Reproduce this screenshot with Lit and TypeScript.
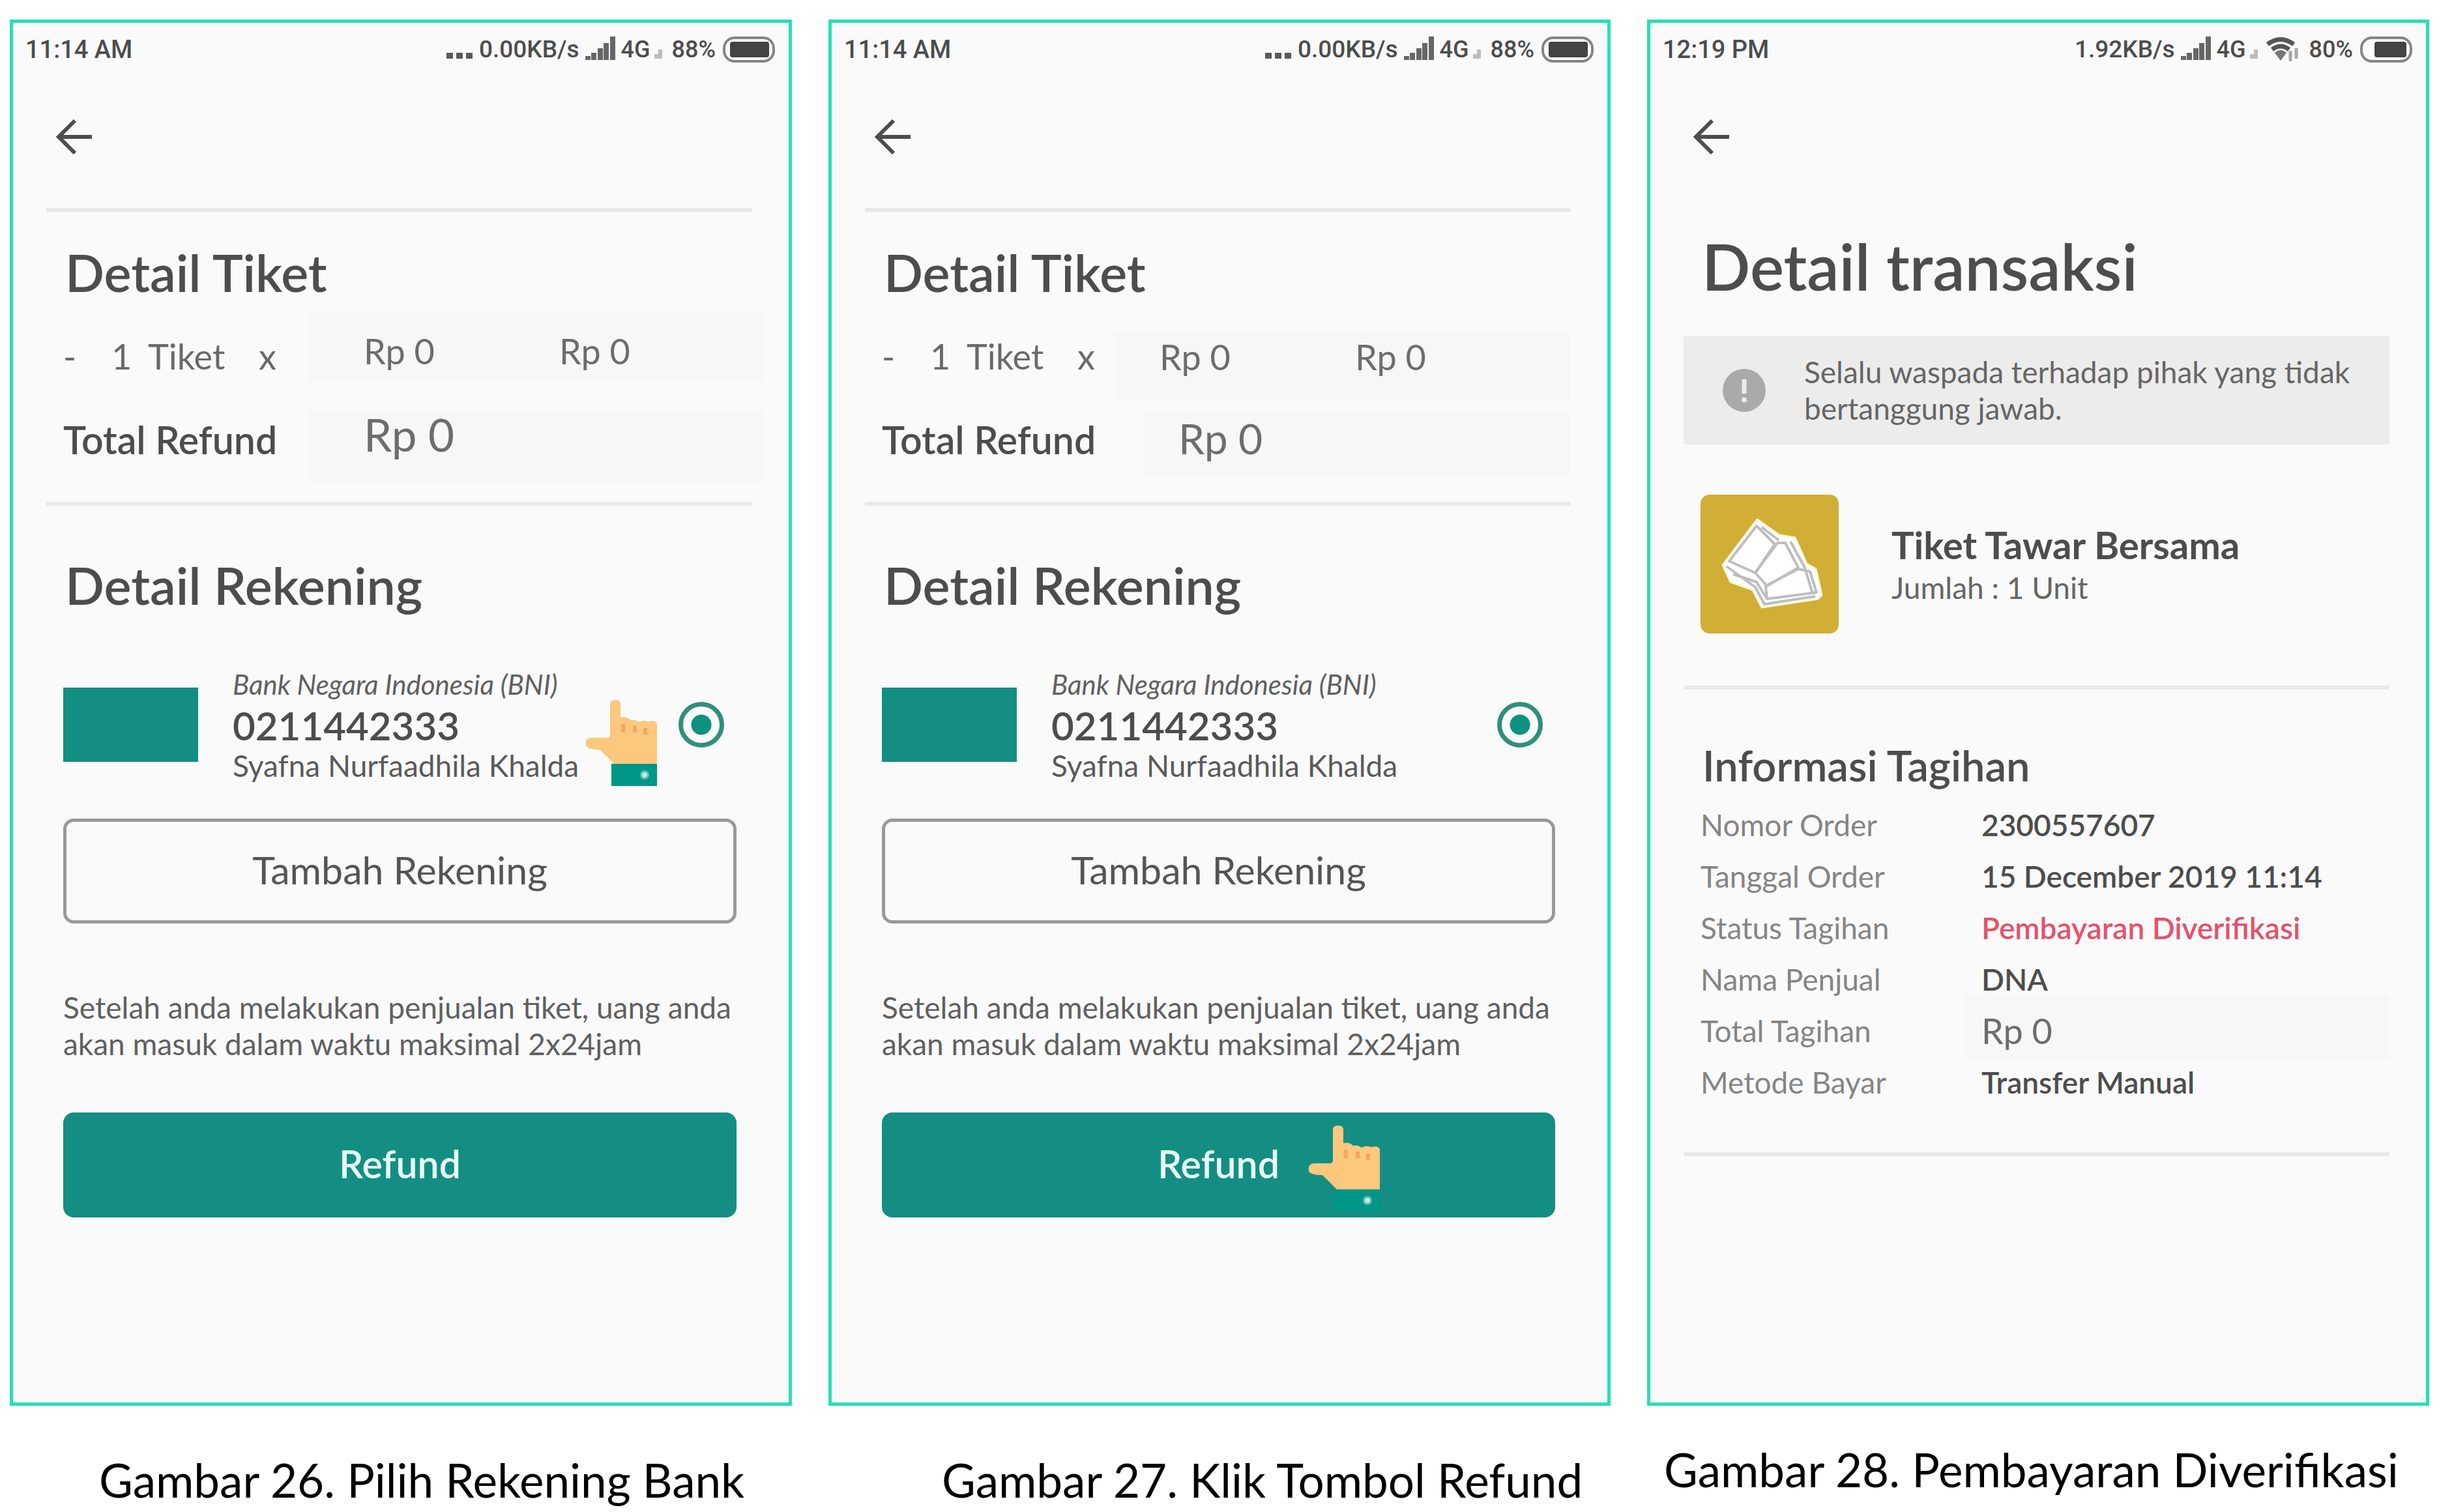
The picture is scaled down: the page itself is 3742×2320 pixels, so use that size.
import { LitElement, html, css, svg, nothing } from "lit";
import { customElement, property } from "lit/decorators.js";

const shared = css`
  * {
    box-sizing: border-box;
  }
  :host {
    display: block;
    font-family: Lato, "Open Sans", sans-serif;
    color: #4d4d4d;
  }
  h1,
  h2,
  h3,
  p,
  dl,
  dd,
  figure {
    margin: 0;
  }
  svg {
    display: block;
    flex: none;
  }
  .divider {
    height: 6px;
    margin: 0 56px 0 51px;
    border: 0;
    background: #e8e8e8;
  }
`;

const hand = html`
  <svg width="112" height="132" viewBox="0 0 112 132" aria-hidden="true">
    <path
      fill="#fbc87d"
      d="M40 6Q40 0 48 0T56 6V27Q66 25 71 31Q78 29 84 34Q90 30 98 33Q112 30 112 38V98H46L24 76Q6 76 3 70Q1 58 12 58H36Q40 58 40 52Z"
    />
    <path fill="none" stroke="#f2a763" stroke-width="6" d="M60 37V50M78 40V50M94 43V53" />
    <rect x="42" y="98" width="70" height="34" fill="#009688" />
    <circle cx="93" cy="115" r="7" fill="#5fbcb2" />
    <circle cx="93" cy="115" r="4" fill="#c4e7e3" />
  </svg>
`;

@customElement("status-bar")
export class StatusBar extends LitElement {
  static styles = [
    shared,
    css`
      .bar {
        display: flex;
        align-items: center;
        height: 82px;
        padding: 0 20px 0 19px;
        font: 500 38px/44px Roboto, sans-serif;
      }
      .time {
        flex: 1;
      }
      .rate {
        margin-right: 9px;
        font-size: 37px;
      }
      .dots {
        margin-right: 10px;
      }
      .net {
        margin: 0 6px 0 9px;
        font-size: 36px;
      }
      .percent {
        margin: 0 11px 0 15px;
        font-size: 36px;
      }
      .wifi {
        margin-left: 12px;
      }
    `,
  ];

  @property() time = "";
  @property() rate = "";
  @property() percent = "";
  @property({ type: Boolean }) wifi = false;

  render() {
    return html`
      <div class="bar">
        <span class="time">${this.time}</span>
        ${this.wifi
          ? nothing
          : html`<svg class="dots" width="40" height="36" viewBox="0 0 40 36" aria-hidden="true">
              <path fill="#5a5a5a" d="M0 23h10v9H0zM15 23h10v9H15zM30 23h10v9H30z" />
            </svg>`}
        <span class="rate">${this.rate}</span>
        <svg width="46" height="40" viewBox="0 0 46 40" aria-hidden="true">
          <path fill="#666" d="M0 30h8v6H0zM9 25h8v11H9zM19 18h8v18h-8zM28 10h8v26h-8zM38 0h8v36h-8z" />
        </svg>
        <span class="net">4G</span>
        <svg width="12" height="36" viewBox="0 0 12 36" aria-hidden="true">
          <path fill="#bdbdbd" d="M0 25h6v7H0zM6 18h6v14H6z" />
        </svg>
        ${this.wifi
          ? html`<svg class="wifi" width="52" height="40" viewBox="0 0 52 40" aria-hidden="true">
              <path fill="none" stroke="#555" stroke-width="7" d="M3 12Q23-3 43 12M10 20Q23 10 36 20" />
              <path fill="#777" d="M14 25Q23 17 32 25L23 37Z" />
              <path fill="none" stroke="#a8a8a8" stroke-width="5" d="M38 22V38M47 18V34" />
            </svg>`
          : nothing}
        <span class="percent">${this.percent}</span>
        <svg width="81" height="42" viewBox="0 0 81 42" aria-hidden="true">
          <rect x="2" y="3" width="76" height="36" rx="16" fill="none" stroke="#858585" stroke-width="4" />
          <rect
            x=${this.wifi ? 22 : 11}
            y="9"
            width=${this.wifi ? 49 : 60}
            height="24"
            rx="4"
            fill="#434343"
          />
        </svg>
      </div>
    `;
  }
}

@customElement("back-link")
export class BackLink extends LitElement {
  static styles = [
    shared,
    css`
      button {
        display: block;
        width: 56px;
        height: 56px;
        margin: 65px 0 0 65px;
        padding: 0;
        border: 0;
        background: none;
      }
    `,
  ];

  render() {
    return html`
      <button aria-label="Kembali">
        <svg width="56" height="56" viewBox="0 0 56 56">
          <path fill="none" stroke="#4d4d4d" stroke-width="6" d="M30 3L5 28L30 53M5 28H56" />
        </svg>
      </button>
    `;
  }
}

@customElement("refund-screen")
export class RefundScreen extends LitElement {
  static styles = [
    shared,
    css`
      .rule-top {
        margin-top: 81px;
      }
      .rule-mid {
        margin-top: 30px;
      }
      h2 {
        padding-left: 80px;
        font-size: 79px;
        line-height: 100px;
        font-weight: 600;
      }
      .tickets {
        margin: 43px 0 9px;
      }
      .account-title {
        margin-top: 72px;
      }
      .row {
        display: flex;
        align-items: flex-start;
        padding: 0 39px 0 77px;
        font-size: 54px;
        line-height: 64px;
      }
      .row.inset {
        padding-right: 57px;
      }
      .items {
        min-height: 154px;
      }
      .totals {
        min-height: 109px;
      }
      .label {
        display: grid;
        grid-template-columns: 74px 56px 170px 1fr;
        flex: none;
        width: 375px;
        padding-top: 38px;
        color: #6a6a6a;
      }
      .inset .label {
        width: 356px;
      }
      .total-label {
        flex: none;
        width: 375px;
        padding-top: 12px;
        font-size: 59px;
        font-weight: 600;
      }
      .inset .total-label {
        width: 402px;
      }
      .box {
        display: grid;
        grid-template-columns: 300px 1fr;
        flex: 1;
        height: 108px;
        padding: 30px 0 0 86px;
        background: #f7f7f7;
        color: #6d6d6d;
      }
      .inset .box {
        margin-top: 30px;
        padding: 9px 0 0 70px;
      }
      .totals .box {
        padding-top: 4px;
        font-size: 69px;
      }
      .totals.inset .box {
        height: 100px;
        margin-top: 0;
        padding: 10px 0 0 53px;
        font-size: 64px;
      }
      .account {
        position: relative;
        display: flex;
        align-items: center;
        margin-top: 71px;
        padding: 0 99px 0 77px;
      }
      .logo {
        width: 207px;
        height: 114px;
        margin-right: 53px;
        background: #148e83;
      }
      .holder {
        flex: 1;
        display: grid;
      }
      .bank {
        font-size: 42px;
        line-height: 62px;
        font-style: italic;
        color: #606060;
      }
      .number {
        font-size: 60px;
        line-height: 64px;
        font-weight: 600;
      }
      .name {
        font-size: 46px;
        line-height: 60px;
        color: #5a5a5a;
      }
      .radio {
        appearance: none;
        width: 70px;
        height: 70px;
        margin: 0;
        border: 7px solid #2f8f7c;
        border-radius: 50%;
        background: radial-gradient(circle, #0f9180 15px, transparent 16px);
      }
      .actions {
        display: flex;
        flex-direction: column;
        padding: 51px 80px 0 77px;
      }
      .actions button {
        height: 161px;
        padding: 0 0 4px;
        border-radius: 16px;
        font-family: inherit;
        font-size: 59px;
      }
      .outline {
        border: 5px solid #999;
        background: transparent;
        color: #555;
      }
      .note {
        margin: 101px 0 77px;
        font-size: 46px;
        line-height: 56px;
        color: #606060;
      }
      .submit {
        position: relative;
        border: 0;
        background: #148e83;
        color: #e9fffb;
        font-weight: 600;
      }
      .pointer {
        position: absolute;
      }
      .account .pointer {
        top: 55px;
        left: 876px;
      }
      .submit .pointer {
        top: 20px;
        left: 652px;
      }
    `,
  ];

  @property() step: "bank" | "refund" = "bank";

  render() {
    const inset = this.step === "refund" ? "inset" : "";
    const pointer = html`<span class="pointer">${hand}</span>`;
    return html`
      <status-bar time="11:14 AM" rate="0.00KB/s" percent="88%"></status-bar>
      <back-link></back-link>
      <hr class="divider rule-top" />
      <h2 class="tickets">Detail Tiket</h2>
      <div class="row items ${inset}">
        <div class="label"><span>-</span><span>1</span><span>Tiket</span><span>x</span></div>
        <div class="box"><span>Rp 0</span><span>Rp 0</span></div>
      </div>
      <div class="row totals ${inset}">
        <div class="total-label">Total Refund</div>
        <div class="box"><span>Rp 0</span></div>
      </div>
      <hr class="divider rule-mid" />
      <h2 class="account-title">Detail Rekening</h2>
      <div class="account">
        <div class="logo"></div>
        <label class="holder" for="account">
          <span class="bank">Bank Negara Indonesia (BNI)</span>
          <span class="number">0211442333</span>
          <span class="name">Syafna Nurfaadhila Khalda</span>
        </label>
        <input class="radio" id="account" type="radio" name="account" checked />
        ${this.step === "bank" ? pointer : nothing}
      </div>
      <div class="actions">
        <button class="outline">Tambah Rekening</button>
        <p class="note">
          Setelah anda melakukan penjualan tiket, uang anda<br />akan masuk dalam waktu maksimal 2x24jam
        </p>
        <button class="submit">Refund${this.step === "refund" ? pointer : nothing}</button>
      </div>
    `;
  }
}

const invoice: { label: string; value: string; kind?: string }[] = [
  { label: "Nomor Order", value: "2300557607" },
  { label: "Tanggal Order", value: "15 December 2019 11:14" },
  { label: "Status Tagihan", value: "Pembayaran Diverifikasi", kind: "status" },
  { label: "Nama Penjual", value: "DNA" },
  { label: "Total Tagihan", value: "Rp 0", kind: "amount" },
  { label: "Metode Bayar", value: "Transfer Manual" },
];

const ticketLines = svg`
  <path fill="#fff" stroke="#fff7dc" stroke-width="3" stroke-linejoin="round"
    d="M87 38L121 62L145 66L163 106L177 114L186 154L180 160L94 173L80 146L46 134L34 108Z" />
  <g fill="none" stroke="#bdbdc2" stroke-width="4" stroke-linejoin="round">
    <path d="M86 48L114 76L84 120L44 102ZM94 50L120 70" />
    <path d="M118 74L130 74L150 112L102 140L84 120ZM138 72L160 112" />
    <path d="M150 114L168 118L178 150L102 160L100 140ZM160 112L172 152" />
    <path d="M40 110L84 142L98 168L176 156M50 122L86 134L102 160" />
  </g>
`;

@customElement("transaction-screen")
export class TransactionScreen extends LitElement {
  static styles = [
    shared,
    css`
      h1 {
        margin-top: 110px;
        padding-left: 79px;
        font-size: 98px;
        line-height: 120px;
        font-weight: 600;
      }
      .alert {
        display: flex;
        align-items: center;
        gap: 58px;
        height: 166px;
        margin: 48px 56px 0 51px;
        padding-left: 60px;
        background: #ececec;
        color: #666;
        font-size: 46px;
        line-height: 56px;
      }
      .product {
        display: flex;
        align-items: center;
        gap: 81px;
        margin: 77px 0 80px 77px;
      }
      .thumb {
        border-radius: 14px;
        background: #d1ae35;
      }
      .product h2 {
        font-size: 58px;
        line-height: 72px;
        font-weight: 700;
      }
      .product p {
        font-size: 46px;
        line-height: 60px;
        color: #666;
      }
      h3 {
        margin: 76px 0 12px;
        padding-left: 80px;
        font-size: 65px;
        line-height: 80px;
        font-weight: 600;
      }
      dl {
        display: grid;
        grid-template-columns: 404px 1fr;
        margin-bottom: 68px;
        padding: 0 56px 0 77px;
        font-size: 46px;
        line-height: 79px;
      }
      dt {
        color: #858585;
      }
      dd {
        padding-left: 27px;
        font-weight: 600;
      }
      .status {
        color: #e5526b;
      }
      .amount {
        margin: -16px 0 -4px;
        padding-top: 16px;
        padding-bottom: 4px;
        background: #f7f7f7;
        color: #6d6d6d;
        font-size: 54px;
        font-weight: 400;
      }
    `,
  ];

  render() {
    return html`
      <status-bar time="12:19 PM" rate="1.92KB/s" percent="80%" wifi></status-bar>
      <back-link></back-link>
      <h1>Detail transaksi</h1>
      <div class="alert">
        <svg width="67" height="67" viewBox="0 0 67 67" aria-hidden="true">
          <circle cx="33" cy="33" r="33" fill="#aaa" />
          <path stroke="#ececec" stroke-width="7" d="M33 16V38M33 44V51" />
        </svg>
        <p>Selalu waspada terhadap pihak yang tidak<br />bertanggung jawab.</p>
      </div>
      <div class="product">
        <svg class="thumb" width="212" height="213" viewBox="0 0 212 213" aria-hidden="true">${ticketLines}</svg>
        <div>
          <h2>Tiket Tawar Bersama</h2>
          <p>Jumlah : 1 Unit</p>
        </div>
      </div>
      <hr class="divider" />
      <h3>Informasi Tagihan</h3>
      <dl>
        ${invoice.map((row) => html`<dt>${row.label}</dt><dd class=${row.kind ?? "plain"}>${row.value}</dd>`)}
      </dl>
      <hr class="divider" />
    `;
  }
}

@customElement("app-root")
export class AppRoot extends LitElement {
  static styles = [
    shared,
    css`
      .page {
        display: grid;
        grid-template-columns: repeat(3, minmax(0, 1fr));
        gap: 56px;
        min-height: 100vh;
        padding: 30px 15px 0;
        background: #fff;
      }
      figure {
        display: flex;
        flex-direction: column;
      }
      .screen {
        flex: 1;
        border: 5px solid #25e0b4;
        background: #fafafa;
      }
      figcaption {
        height: 163px;
        padding-top: 72px;
        color: #000;
        font-size: 71px;
        line-height: 84px;
        white-space: nowrap;
      }
      .bank {
        padding-left: 137px;
      }
      .refund {
        padding-left: 174px;
      }
      .verified {
        padding: 56px 0 0 26px;
      }
    `,
  ];

  render() {
    return html`
      <main class="page">
        <figure>
          <div class="screen"><refund-screen step="bank"></refund-screen></div>
          <figcaption class="bank">Gambar 26. Pilih Rekening Bank</figcaption>
        </figure>
        <figure>
          <div class="screen"><refund-screen step="refund"></refund-screen></div>
          <figcaption class="refund">Gambar 27. Klik Tombol Refund</figcaption>
        </figure>
        <figure>
          <div class="screen"><transaction-screen></transaction-screen></div>
          <figcaption class="verified">Gambar 28. Pembayaran Diverifikasi</figcaption>
        </figure>
      </main>
    `;
  }
}
